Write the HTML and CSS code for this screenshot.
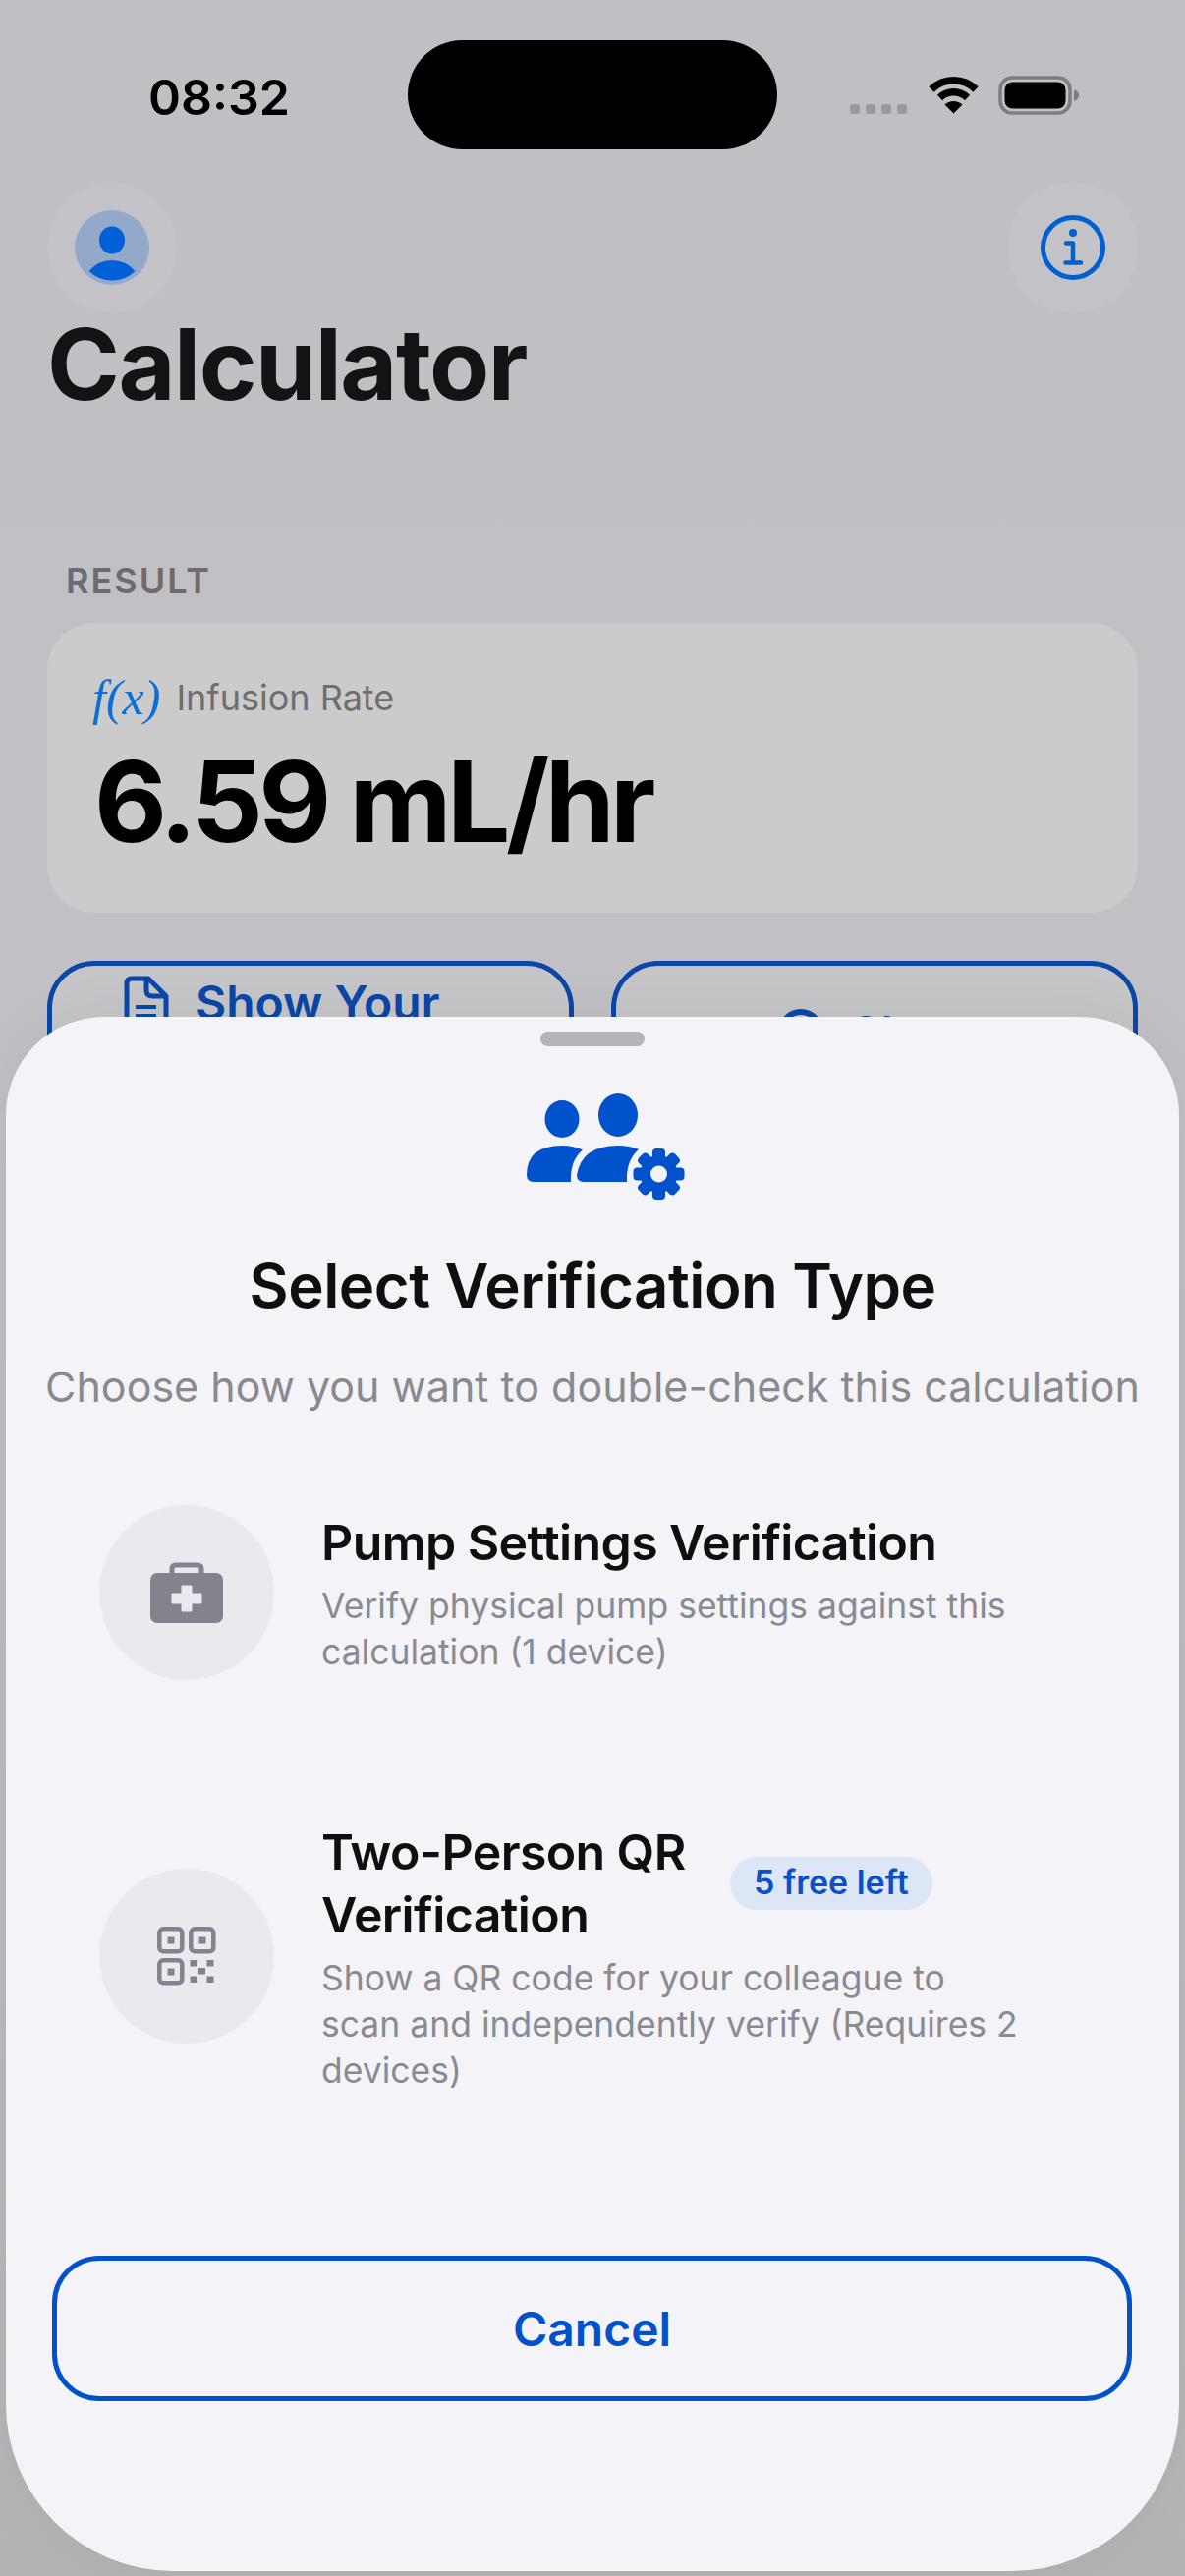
FILE: index.html
```html
<!DOCTYPE html>
<html lang="en">
<head>
  <meta charset="UTF-8" />
  <title>Calculator</title>
  <link rel="stylesheet" href="styles.css">
</head>
<body>
<div class="screen">

  <div class="status-bar">
    <div class="time">08:32</div>
    <div class="island"></div>
    <div class="status-icons">
      <div class="signal"><span></span><span></span><span></span><span></span></div>
      <svg class="wifi" width="51" height="38" viewBox="0 0 51 38">
        <path d="M3 13 A32 32 0 0 1 48 13" fill="none" stroke="#000" stroke-width="7.5"/>
        <path d="M11.5 21.5 A20 20 0 0 1 39.5 21.5" fill="none" stroke="#000" stroke-width="7.5"/>
        <path d="M25.5 37.5 L16.5 28.5 A13 13 0 0 1 34.5 28.5 Z" fill="#000"/>
      </svg>
      <svg class="battery" width="83" height="40" viewBox="0 0 83 40">
        <rect x="2" y="2" width="71" height="36" rx="12" fill="none" stroke="#7d7d80" stroke-width="3.5"/>
        <rect x="6.5" y="6.5" width="62" height="27" rx="8" fill="#000"/>
        <path d="M77 14 Q82 16 82 20 Q82 24 77 26 Z" fill="#7d7d80"/>
      </svg>
    </div>
  </div>

  <div class="nav">
    <div class="nav-btn">
      <svg width="76" height="76" viewBox="0 0 76 76">
        <circle cx="38" cy="38" r="38" fill="#93a9ca"/>
        <ellipse cx="38" cy="30.5" rx="13" ry="14" fill="#0060d8"/>
        <path d="M14.5 62 Q24 51 38 51 Q52 51 61.5 62 Q52 71.5 38 71.5 Q24 71.5 14.5 62 Z" fill="#0060d8"/>
      </svg>
    </div>
    <div class="nav-btn">
      <svg width="70" height="70" viewBox="0 0 70 70">
        <circle cx="35" cy="35" r="30.5" fill="none" stroke="#0060d0" stroke-width="5"/>
        <circle cx="35" cy="20" r="4" fill="#0060d0"/>
        <path d="M28 30.5 H35 V50.5 M27.5 50.5 H43" fill="none" stroke="#0060d0" stroke-width="4.5" stroke-linecap="round" stroke-linejoin="round"/>
      </svg>
    </div>
  </div>

  <h1 class="page-title">Calculator</h1>

  <div class="section-label">RESULT</div>
  <div class="result-card">
    <div class="result-head">
      <span class="fx">f(x)</span>
      <span class="result-name">Infusion Rate</span>
    </div>
    <div class="result-value">6.59 mL/hr</div>
  </div>

  <div class="action-row">
    <div class="action-btn">
      <svg width="46" height="60" viewBox="0 0 46 60">
        <path d="M8 3 H25 L43 21 V52 Q43 57 38 57 H8 Q3 57 3 52 V8 Q3 3 8 3 Z M23 4 V15 Q23 21 29 21 H42" fill="none" stroke="#0a47a8" stroke-width="5" stroke-linejoin="round"/>
        <path d="M12 32 H33 M12 41 H33" stroke="#0a47a8" stroke-width="4"/>
      </svg>
      <span>Show Your</span>
    </div>
    <div class="action-btn action-low">
      <svg width="46" height="46" viewBox="0 0 46 46">
        <circle cx="23" cy="23" r="20" fill="none" stroke="#0a47a8" stroke-width="6"/>
      </svg>
      <span>Share</span>
    </div>
  </div>

  <div class="sheet">
    <div class="handle"></div>
    <svg class="sheet-icon" width="170" height="115" viewBox="0 0 170 115">
      <ellipse cx="38" cy="29" rx="17.5" ry="19" fill="#0052cc"/>
      <path d="M2 86 Q2 56 38 56 Q50 56 59 60.5 Q46 71 47 93 H9 Q2 93 2 86 Z" fill="#0052cc"/>
      <ellipse cx="95" cy="25" rx="20" ry="22" fill="#0052cc"/>
      <path d="M53 86 Q58 56 95 56 Q107 56 116 60 Q103 71 104 93 H60 Q53 93 53 86 Z" fill="#0052cc"/>
      <g fill="#0052cc">
        <circle cx="136.5" cy="85" r="19"/>
        <rect x="130" y="59" width="13" height="52" rx="4"/>
        <rect x="130" y="59" width="13" height="52" rx="4" transform="rotate(45 136.5 85)"/>
        <rect x="130" y="59" width="13" height="52" rx="4" transform="rotate(90 136.5 85)"/>
        <rect x="130" y="59" width="13" height="52" rx="4" transform="rotate(135 136.5 85)"/>
      </g>
      <circle cx="136.5" cy="85" r="8.5" fill="#f3f3f8"/>
    </svg>
    <h2 class="sheet-title">Select Verification Type</h2>
    <p class="sheet-sub">Choose how you want to double-check this calculation</p>

    <div class="option option-pump">
      <div class="option-icon">
        <svg width="74" height="62" viewBox="0 0 74 62">
          <path d="M22 11 V7 Q22 3 26 3 H48 Q52 3 52 7 V11" fill="none" stroke="#83838d" stroke-width="5"/>
          <rect x="0" y="11" width="74" height="51" rx="7" fill="#83838d"/>
          <path d="M32 24 H42 V32 H52 V42 H42 V50 H32 V42 H22 V32 H32 Z" fill="#e9e9ee" stroke="#e9e9ee" stroke-width="1" stroke-linejoin="round"/>
        </svg>
      </div>
      <div class="option-text">
        <div class="option-title">Pump Settings Verification</div>
        <div class="option-desc">Verify physical pump settings against this calculation (1 device)</div>
      </div>
    </div>

    <div class="option option-qr">
      <div class="option-icon">
        <svg width="60" height="60" viewBox="0 0 60 60">
          <g fill="none" stroke="#83838d" stroke-width="4.5">
            <rect x="2.3" y="2.3" width="23" height="23" rx="4"/>
            <rect x="34.3" y="2.3" width="23" height="23" rx="4"/>
            <rect x="2.3" y="34.3" width="23" height="23" rx="4"/>
          </g>
          <g fill="#83838d">
            <rect x="10.5" y="10.5" width="7" height="7"/>
            <rect x="42.5" y="10.5" width="7" height="7"/>
            <rect x="10.5" y="42.5" width="7" height="7"/>
            <rect x="33.5" y="34" width="7" height="6.5"/>
            <rect x="50.5" y="34" width="7" height="6.5"/>
            <rect x="42" y="42" width="7" height="6.5"/>
            <rect x="33.5" y="50.5" width="7" height="6.5"/>
            <rect x="50.5" y="50.5" width="7" height="6.5"/>
          </g>
        </svg>
      </div>
      <div class="option-text">
        <div class="option-head">
          <div class="option-title">Two-Person QR Verification</div>
          <span class="badge">5 free left</span>
        </div>
        <div class="option-desc">Show a QR code for your colleague to scan and independently verify (Requires 2 devices)</div>
      </div>
    </div>

    <button class="cancel-btn">Cancel</button>
  </div>

</div>
</body>
</html>
```
FILE: styles.css
```css
* {
  box-sizing: border-box;
}
html, body {
  margin: 0;
  padding: 0;
}
body {
  font-family: Inter, "Noto Sans", sans-serif;
  color: #111;
}
.screen {
  position: relative;
  width: 1206px;
  height: 2622px;
  overflow: hidden;
  background: linear-gradient(#c0c0c4 0, #c1c1c5 1100px, #bcbcc0 2000px, #b4b4b7 2622px);
}

/* status bar */
.status-bar {
  display: grid;
  grid-template-columns: 415px 376px 1fr;
  padding-top: 41px;
  height: 152px;
}
.time {
  padding: 30px 0 0 151px;
  font-size: 50px;
  line-height: 56px;
  font-weight: 600;
  color: #000;
}
.island {
  height: 111px;
  border-radius: 56px;
  background: #000;
}
.status-icons {
  display: flex;
  align-items: flex-start;
  padding: 37px 0 0 74px;
}
.signal {
  display: flex;
  gap: 6px;
  margin-top: 28px;
}
.signal span {
  width: 10px;
  height: 10px;
  border-radius: 3px;
  background: #9a9a9c;
}
.wifi {
  margin-left: 22px;
}
.battery {
  margin: -1px 0 0 20px;
}

/* nav */
.nav {
  display: flex;
  justify-content: space-between;
  padding: 34px 48px 0;
}
.nav-btn {
  width: 132px;
  height: 132px;
  border-radius: 50%;
  background: rgba(255,255,255,0.05);
  display: flex;
  align-items: center;
  justify-content: center;
}
.page-title {
  margin: -6px 0 0 48px;
  font-size: 100px;
  line-height: 118px;
  font-weight: 700;
  letter-spacing: -1.5px;
  color: #131313;
}
.section-label {
  margin: 140px 0 0 67px;
  font-size: 36px;
  line-height: 42px;
  font-weight: 600;
  letter-spacing: 2px;
  color: #6b6b70;
}
.result-card {
  margin: 22px 48px 0;
  height: 295px;
  padding: 48px 46px 0;
  border-radius: 48px;
  background: #cbcbcb;
}
.result-head {
  display: flex;
  align-items: center;
  gap: 16px;
}
.fx {
  font-family: "Liberation Serif", serif;
  font-style: italic;
  font-size: 50px;
  line-height: 56px;
  color: #0a6fd6;
}
.result-name {
  font-size: 36px;
  color: #6e6e70;
}
.result-value {
  margin: 13px 0 0 2px;
  font-size: 114px;
  line-height: 130px;
  font-weight: 700;
  letter-spacing: -4.5px;
  color: #000;
}
.action-row {
  display: grid;
  grid-template-columns: minmax(0, 1fr) minmax(0, 1fr);
  gap: 38px;
  margin: 49px 48px 0;
}
.action-btn {
  height: 160px;
  border: 5px solid #0a47a8;
  border-radius: 48px;
  background: #c6c6c8;
  display: flex;
  align-items: flex-start;
  gap: 27px;
  padding: 10px 0 0 73px;
  font-size: 48px;
  line-height: 56px;
  font-weight: 600;
  white-space: nowrap;
  color: #0a47a8;
}
.action-low {
  padding: 44px 0 0 165px;
}
.action-low span {
  margin-top: -3px;
}

/* sheet */
.sheet {
  position: absolute;
  left: 6px;
  right: 6px;
  top: 1035px;
  bottom: 5px;
  display: flex;
  flex-direction: column;
  align-items: center;
  border-radius: 100px 100px 170px 170px;
  background: #f3f3f8;
  box-shadow: 0 0 60px rgba(0,0,0,0.06);
}
.handle {
  width: 106px;
  height: 15px;
  margin-top: 15px;
  border-radius: 8px;
  background: #b4b4b9;
}
.sheet-icon {
  margin: 45px 0 0 32px;
}
.sheet-title {
  margin: 48px 0 0;
  font-size: 61.7px;
  line-height: 72px;
  font-weight: 600;
  letter-spacing: -0.5px;
  color: #0f0f10;
}
.sheet-sub {
  margin: 38px 0 0;
  font-size: 43px;
  line-height: 56px;
  color: #8a8a8e;
  white-space: nowrap;
}
.option {
  align-self: stretch;
  display: flex;
  gap: 48px;
  padding: 0 155px 0 95px;
}
.option-pump {
  align-items: center;
  margin-top: 93px;
}
.option-qr {
  align-items: flex-start;
  margin-top: 143px;
}
.option-icon {
  flex: none;
  width: 178px;
  height: 178px;
  border-radius: 50%;
  background: #e9e9ee;
  display: flex;
  align-items: center;
  justify-content: center;
}
.option-qr .option-icon {
  margin-top: 49px;
}
.option-text {
  flex: 1;
  min-width: 0;
}
.option-head {
  display: flex;
  align-items: center;
  gap: 26px;
}
.option-head .option-title {
  width: 390px;
}
.option-title {
  font-size: 50px;
  line-height: 64px;
  font-weight: 600;
  letter-spacing: -0.6px;
  color: #0f0f10;
}
.option-desc {
  margin-top: 9px;
  font-size: 35.5px;
  line-height: 47px;
  color: #8a8a92;
}
.badge {
  flex: none;
  padding: 0 24px;
  height: 54px;
  line-height: 52px;
  border-radius: 27px;
  background: #dce6f6;
  font-size: 34px;
  font-weight: 600;
  color: #0a50c8;
}
.cancel-btn {
  align-self: stretch;
  height: 148px;
  margin: auto 48px 173px 47px;
  border: 5px solid #0052cc;
  border-radius: 48px;
  background: none;
  font-family: inherit;
  font-size: 48px;
  font-weight: 600;
  color: #0052cc;
}
```
